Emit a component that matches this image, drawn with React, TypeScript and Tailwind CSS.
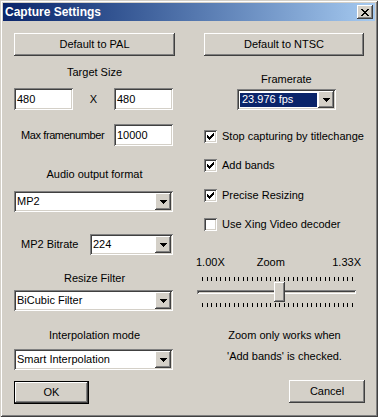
import React from 'react';

const raised =
  'shadow-[inset_-1px_-1px_#404040,inset_1px_1px_#ffffff,inset_-2px_-2px_#808080,inset_2px_2px_#d4d0c8]';
const sunken =
  'shadow-[inset_1px_1px_#808080,inset_-1px_-1px_#ffffff,inset_2px_2px_#404040,inset_-2px_-2px_#d4d0c8]';

function Arrow() {
  return (
    <svg width="7" height="4" viewBox="0 0 7 4" shapeRendering="crispEdges">
      <path d="M0 0h7v1h-7z M1 1h5v1h-5z M2 2h3v1h-3z M3 3h1v1h-1z" fill="#000" />
    </svg>
  );
}

function Btn({ label, className, isDefault }: { label: string; className: string; isDefault?: boolean }) {
  if (isDefault) {
    return (
      <div className={`flex h-[23px] items-center justify-center border border-black bg-[#d4d0c8] ${raised} ${className}`}>
        {label}
      </div>
    );
  }
  return (
    <div className={`flex h-[23px] items-center justify-center bg-[#d4d0c8] ${raised} ${className}`}>{label}</div>
  );
}

function Edit({ value, className }: { value: string; className: string }) {
  return (
    <div className={`flex h-[22px] items-center bg-white pl-[3px] ${sunken} ${className}`}>{value}</div>
  );
}

function Combo({ value, className, selected }: { value: string; className: string; selected?: boolean }) {
  return (
    <div className={`flex h-[21px] bg-white p-[2px] ${sunken} ${className}`}>
      <div className="flex flex-1 items-center">
        {selected ? (
          <span className="ml-[1px] mr-[1px] flex h-[14px] flex-1 items-center bg-[#0a246a] pl-[2px] text-white">
            {value}
          </span>
        ) : (
          <span className="pl-[1px]">{value}</span>
        )}
      </div>
      <div className={`flex h-[17px] w-[16px] items-center justify-center bg-[#d4d0c8] ${raised}`}>
        <Arrow />
      </div>
    </div>
  );
}

function Check({ label, checked, className }: { label: string; checked: boolean; className: string }) {
  return (
    <div className={`ml-[8px] flex h-[13px] items-center gap-[5px] ${className}`}>
      <div className={`h-[13px] w-[13px] shrink-0 bg-white ${sunken}`}>
        {checked && (
          <svg width="13" height="13" viewBox="0 0 13 13" shapeRendering="crispEdges" className="block">
            <path
              d="M9 3h1v1h-1z M8 4h2v1h-2z M3 5h1v1h-1z M7 5h3v1h-3z M3 6h2v1h-2z M6 6h3v1h-3z M3 7h5v1h-5z M4 8h3v1h-3z M5 9h1v1h-1z"
              fill="#000"
            />
          </svg>
        )}
      </div>
      <span>{label}</span>
    </div>
  );
}

const ticks = Array.from({ length: 34 }, (_, i) => Math.round(6 + (i * 150) / 33));

function Ticks() {
  return (
    <svg width="162" height="4" viewBox="0 0 162 4" shapeRendering="crispEdges" className="block">
      {ticks.map((x) => (
        <rect key={x} x={x} y={0} width={1} height={4} fill="#000" />
      ))}
    </svg>
  );
}

export default function App() {
  return (
    <div className="h-[417px] w-[378px] bg-[#d4d0c8] p-[3px] text-[11px] leading-[13px] text-black [font-family:'Liberation_Sans',Arial,sans-serif] shadow-[inset_1px_1px_#d4d0c8,inset_-1px_-1px_#404040,inset_2px_2px_#ffffff,inset_-2px_-2px_#808080]">
      {/* title bar */}
      <div className="flex h-[18px] items-center bg-gradient-to-r from-[#0a246a] to-[#a6caf0] pl-[2px] pr-[2px]">
        <span className="flex-1 text-[12px] font-bold text-white">Capture Settings</span>
        <div className={`flex h-[14px] w-[16px] items-center justify-center bg-[#d4d0c8] ${raised}`}>
          <svg width="8" height="7" viewBox="0 0 8 7" shapeRendering="crispEdges">
            <path
              d="M0 0h2v1h-2z M6 0h2v1h-2z M1 1h2v1h-2z M5 1h2v1h-2z M2 2h4v1h-4z M3 3h2v1h-2z M2 4h4v1h-4z M1 5h2v1h-2z M5 5h2v1h-2z M0 6h2v1h-2z M6 6h2v1h-2z"
              fill="#000"
            />
          </svg>
        </div>
      </div>

      <div className="flex pl-[11px] pt-[12px]">
        {/* left column */}
        <div className="flex w-[161px] flex-col">
          <Btn label="Default to PAL" className="w-[161px]" />
          <div className="mt-[10px] text-center">Target Size</div>
          <div className="mt-[9px] flex items-center">
            <Edit value="480" className="w-[59px]" />
            <span className="flex-1 text-center">X</span>
            <Edit value="480" className="mr-[2px] w-[59px]" />
          </div>
          <div className="mt-[14px] flex items-center">
            <span className="pl-[7px] tracking-[-0.4px]">Max framenumber</span>
            <Edit value="10000" className="ml-auto mr-[2px] w-[59px]" />
          </div>
          <div className="mt-[22px] text-center">Audio output format</div>
          <Combo value="MP2" className="mt-[10px] w-[159px]" />
          <div className="mt-[22px] flex items-center">
            <span className="pl-[7px]">MP2 Bitrate</span>
            <Combo value="224" className="ml-auto mr-[2px] w-[83px]" />
          </div>
          <div className="mt-[17px] text-center">Resize Filter</div>
          <Combo value="BiCubic Filter" className="mt-[5px] w-[159px]" />
          <div className="mt-[18px] text-center">Interpolation mode</div>
          <Combo value="Smart Interpolation" className="mt-[7px] w-[159px]" />
          <Btn label="OK" className="mt-[11px] w-[75px]" isDefault />
        </div>

        {/* right column */}
        <div className="ml-[21px] flex w-[169px] flex-col">
          <Btn label="Default to NTSC" className="ml-[8px] w-[160px]" />
          <div className="ml-[65px] mt-[17px]">Framerate</div>
          <Combo value="23.976 fps" className="ml-[41px] mt-[3px] w-[99px]" selected />
          <Check label="Stop capturing by titlechange" checked className="mt-[20px]" />
          <Check label="Add bands" checked className="mt-[16px]" />
          <Check label="Precise Resizing" checked className="mt-[17px]" />
          <Check label="Use Xing Video decoder" checked={false} className="mt-[16px]" />
          <div className="mt-[25px] flex pr-[4px]">
            <span>1.00X</span>
            <span className="ml-[32px]">Zoom</span>
            <span className="ml-auto">1.33X</span>
          </div>
          <div className="mt-[8px] w-[162px]">
            <Ticks />
            <div className="relative h-[22px]">
              <div className="absolute left-[1px] top-[9px] h-[4px] w-[159px] bg-[#d4d0c8] shadow-[inset_1px_1px_#808080,inset_-1px_-1px_#ffffff,inset_2px_2px_#404040]" />
              <div className={`absolute left-[78px] top-[1px] h-[20px] w-[11px] bg-[#d4d0c8] ${raised}`} />
            </div>
            <Ticks />
          </div>
          <div className="mt-[22px] pl-[8px] text-center">Zoom only works when</div>
          <div className="mt-[8px] pl-[8px] text-center">'Add bands' is checked.</div>
          <Btn label="Cancel" className="ml-[93px] mt-[17px] w-[76px]" />
        </div>
      </div>
    </div>
  );
}
